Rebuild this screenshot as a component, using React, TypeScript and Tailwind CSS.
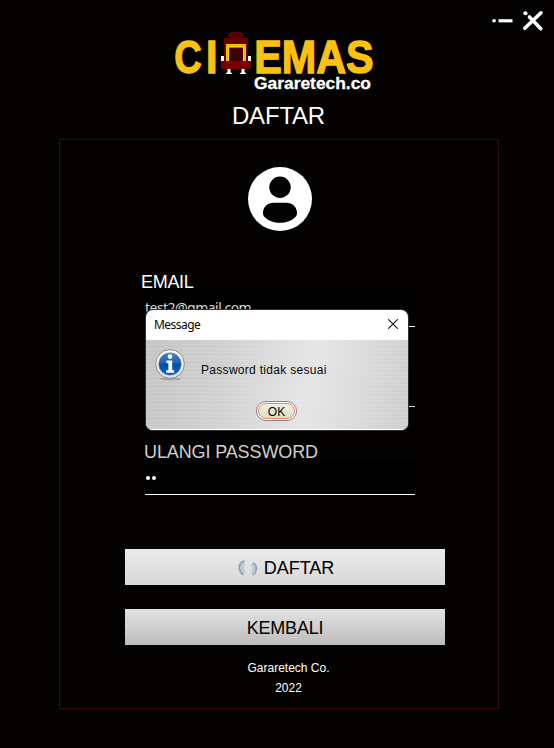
import React from "react";

const SANS = "font-['Liberation_Sans',Arial,sans-serif]";

function Logo() {
  return (
    <svg width="204" height="66" viewBox="172 28 204 66" className="block overflow-visible">
      <g fontFamily="'Liberation Sans', Arial, sans-serif" fontWeight="bold" fill="#fcc110" stroke="#fcc110" strokeWidth="1.3" fontSize="46.5">
        <text x="174.2" y="73" textLength="27.5" lengthAdjust="spacingAndGlyphs">C</text>
        <text x="206" y="73" textLength="11.500" lengthAdjust="spacingAndGlyphs">I</text>
        <text x="254.2" y="73" textLength="119.500" lengthAdjust="spacingAndGlyphs">EMAS</text>
      </g>
      <text x="254" y="89" textLength="117" lengthAdjust="spacingAndGlyphs" fontFamily="'Liberation Sans', Arial, sans-serif" fontWeight="bold" fontSize="16" fill="#fff" stroke="#fff" strokeWidth="0.3">Gararetech.co</text>
      <ellipse cx="236" cy="35" rx="8" ry="3.2" fill="#650000" />
      <ellipse cx="236" cy="35" rx="5" ry="1.6" fill="#450000" />
      <path d="M225 38h22q1 0 1 1v23h-24V39q0-1 1-1z" fill="#650000" />
      <path d="M226 44h20v19h-20z" fill="#fcc110" />
      <path d="M227 45h18v17h-18z" fill="#c98c08" />
      <path d="M227.5 45.5h17v18h-17z" fill="#ffdc00" />
      <path d="M229 47.5h14v16h-14z" fill="#650000" />
      <path d="M230 48.500h12v14h-12z" fill="#3b0000" />
      <path d="M221 56h3v6h-3zM248 56h3v6h-3z" fill="#fff" />
      <path d="M221 61h30v6q0 2-2 2h-26q-2 0-2-2z" fill="#780000" />
      <path d="M227.5 69h3v3l2 2h-7l2-2zM241.5 69h3v3l2 2h-7l2-2z" fill="#fff" />
    </svg>
  );
}

function WindowControls() {
  return (
    <svg className="absolute left-[488px] top-[6px]" width="60" height="30" viewBox="488 6 60 30" fill="none" stroke="#fff" strokeLinecap="round">
      <path d="M494 20.8h.1" strokeWidth="3.6" />
      <path d="M498.500 20.8h14" strokeWidth="3.2" strokeLinecap="butt" />
      <path d="M524.800 28.300l16.200-15.500M529.500 17l11.300 11.700" strokeWidth="3.6" />
      <path d="M525.3 13.2h.2" strokeWidth="4" />
    </svg>
  );
}

function UserIcon() {
  return (
    <svg width="64" height="64" viewBox="0 0 64 64" className="ml-[188px] block">
      <circle cx="32" cy="32" r="32" fill="#fff" />
      <circle cx="32" cy="20.3" r="10.7" fill="#030201" />
      <path d="M26 35.8h12c7 0 11 4.8 11 10.2 0 1.8-.5 3-1.6 4C44 53.7 38 55.8 32 55.8S20 53.7 16.6 50C15.500 49 15 47.800 15 46c0-5.400 4-10.200 11-10.200z" fill="#030201" />
    </svg>
  );
}

function InfoIcon() {
  return (
    <svg width="34" height="36" viewBox="0 0 34 36" className="absolute left-[7px] top-[8px]">
      <defs>
        <linearGradient id="ring" x1="0" y1="0" x2="0" y2="1">
          <stop offset="0" stopColor="#fff" />
          <stop offset="1" stopColor="#e2e2e2" />
        </linearGradient>
        <linearGradient id="ball" x1="0" y1="0" x2="0" y2="1">
          <stop offset="0" stopColor="#437fbd" />
          <stop offset="0.45" stopColor="#2065b3" />
          <stop offset="0.5" stopColor="#0450a4" />
          <stop offset="1" stopColor="#0864bb" />
        </linearGradient>
      </defs>
      <ellipse cx="17" cy="31" rx="11" ry="1.500" fill="#777" opacity=".45" />
      <circle cx="17" cy="16" r="14.300" fill="url(#ring)" stroke="#8d8d8d" />
      <circle cx="17" cy="16" r="11.300" fill="url(#ball)" stroke="#8494aa" strokeWidth=".6" />
      <circle cx="17" cy="8.600" r="2.300" fill="#fff" />
      <path d="M13.500 12.500h5.700v9.800h2v2.500h-8v-2.500h2.200v-7.300h-1.900z" fill="#fff" />
    </svg>
  );
}

function Spinner() {
  return (
    <svg width="20" height="16" viewBox="0 0 20 16" fill="none" className="mr-[6px]">
      <path d="M6.500 1Q.5 3 1.500 9q.7 4 4 5.500" stroke="#8ba6ba" strokeWidth="2" />
      <path d="M6 3Q2.500 8 6.500 13" stroke="#b9cbd8" strokeWidth="3" />
      <path d="M15 3q4 2 3 7-.5 3-3.500 5" stroke="#8ba6ba" strokeWidth="2" />
      <path d="M13.500 3.500q4 4 1 9.500" stroke="#b9cbd8" strokeWidth="3" />
    </svg>
  );
}

function Dialog() {
  return (
    <div className="absolute left-[146px] top-[310px] h-[120px] w-[262px] overflow-hidden rounded-[7px] bg-white shadow-[0_0_0_1px_#30302f]">
      <div className="flex h-[30px] items-center justify-between pl-2 pr-[10px] text-[#050505]">
        <span className="font-['Noto_Sans','Open_Sans',sans-serif] text-[12px] leading-[30px] tracking-[-0.55px]">Message</span>
        <svg width="10" height="10" viewBox="0 0 10 10" className="mb-[2px]">
          <path d="M.3.3l9.400 9.400M9.700.3L.3 9.700" stroke="#111" strokeWidth="1.100" />
        </svg>
      </div>
      <div className="relative h-[90px] border-b border-white bg-[repeating-linear-gradient(0deg,#ffffff18_0px,#ffffff18_1px,transparent_1px,transparent_4px),linear-gradient(100deg,#c5c5c5_0%,#d0d0d0_28%,#e6e6e6_62%,#dcdcdc_78%,#cecece_100%)] text-[12px] text-[#080808]">
        <InfoIcon />
        <p className="pl-[55px] pt-[22px] leading-[16px] tracking-[0.3px]">Password tidak sesuai</p>
        <button className="ml-[110px] mt-[23px] flex h-5 w-[41px] rounded-full border border-[#858585] bg-white p-[1px]">
          <span className="flex h-full w-full items-center justify-center rounded-full border border-[#fa805f] bg-linear-to-b from-[#edf0e2] to-[#d9dfc9] pt-[1px] leading-none">OK</span>
        </button>
      </div>
    </div>
  );
}

export default function App() {
  return (
    <div className={`relative h-[748px] w-[554px] overflow-hidden bg-[#030201] ${SANS} text-white`}>
      <WindowControls />
      <header className="h-[139px] pt-[28px]">
        <div className="pl-[172px]"><Logo /></div>
        <h1 className="mt-[7px] pl-[3px] text-center text-[24px] leading-[30px] tracking-[-0.200px]">DAFTAR</h1>
      </header>
      <main className="ml-[59px] h-[570px] w-[440px] border border-[#380c0c] pt-[27px]">
        <UserIcon />
        <section className="ml-[85px] mt-[41px] w-[270px]">
          <label className="-ml-1 block h-[17px] text-[18px] leading-5 tracking-[-0.3px]">EMAIL</label>
          <div className="h-[38px] border-b border-white bg-black pt-[9px] font-['Noto_Sans','Open_Sans',sans-serif] text-[14px] leading-5 tracking-[-0.53px] text-[#d8d8d8]">test2@gmail.com</div>
          <div className="mt-[28px] h-[12px] border-l border-[#26435f]" />
          <div className="mt-[2px] h-[38px] border-b border-[#d8d8d8] bg-black" />
          <label className="-ml-px mt-[35px] block h-[18px] text-[18px] leading-5 tracking-[-0.12px] text-[#d0d0d0]">ULANGI PASSWORD</label>
          <div className="flex h-[35px] gap-[2px] border-b border-white bg-black pl-px pt-[16px]">
            <i className="h-1 w-1 rounded-full bg-white" />
            <i className="h-1 w-1 rounded-full bg-white" />
          </div>
        </section>
        <div className="ml-[65px] mt-[54px] flex w-[320px] flex-col gap-6 text-[18px] text-black">
          <button className="flex h-9 items-center justify-center bg-linear-to-b from-[#eaeaea] to-[#d8d8d8] pl-[2px] pt-[2px]"><Spinner />DAFTAR</button>
          <button className="flex h-9 items-center justify-center bg-linear-to-b from-[#e2e2e2] to-[#bdbdbd] pt-[2px] tracking-[-0.2px]">KEMBALI</button>
        </div>
        <footer className="mt-[13px] pl-[19px] text-center text-[12px] leading-5">
          <p>Gararetech Co.</p>
          <p>2022</p>
        </footer>
      </main>
      <Dialog />
    </div>
  );
}
